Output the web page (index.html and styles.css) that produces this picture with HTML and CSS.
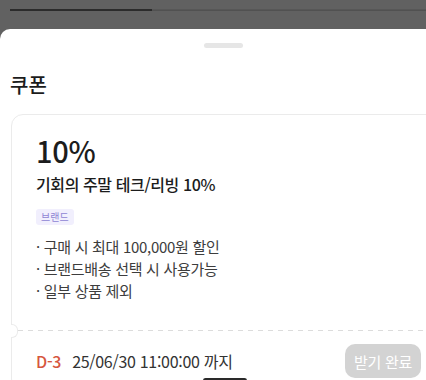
FILE: index.html
```html
<!DOCTYPE html>
<html lang="ko">
<head>
  <meta charset="UTF-8" />
  <meta name="viewport" content="width=device-width, initial-scale=1.0" />
  <title>쿠폰</title>
  <link rel="stylesheet" href="styles.css">
</head>
<body>

  <div class="tabs">
    <div class="tab-track">
      <div class="tab-active"></div>
    </div>
  </div>

  <section class="sheet">
    <div class="handle"></div>
    <h2 class="sheet-title">쿠폰</h2>

    <div class="coupon">
      <div class="coupon-body">
        <div class="rate">10%</div>
        <h3 class="coupon-name">기회의 주말 테크/리빙 10%</h3>
        <span class="badge">브랜드</span>
        <ul class="conditions">
          <li>구매 시 최대 100,000원 할인</li>
          <li>브랜드배송 선택 시 사용가능</li>
          <li>일부 상품 제외</li>
        </ul>
      </div>

      <div class="coupon-footer">
        <div class="expire">
          <span class="dday">D-3</span>
          <span class="date">25/06/30 11:00:00 까지</span>
        </div>
        <button class="get-button" disabled>받기 완료</button>
      </div>
    </div>
  </section>

  <div class="home-bar"></div>

</body>
</html>
```

FILE: styles.css
```css
:root {
  --dim: #616161;
  --text: #1c1c1c;
  --sub: #3d3d3d;
  --line: #ebebeb;
  --red: #d6563e;
}

* {
  box-sizing: border-box;
  margin: 0;
  padding: 0;
  font-family: 'Noto Sans CJK KR', 'Noto Sans', sans-serif;
}

html, body {
  height: 380px;
  overflow: hidden;
}

body {
  background: var(--dim);
  color: var(--text);
  position: relative;
}

.tabs {
  height: 29px;
  padding: 9px 0 0 10px;
}

.tab-track {
  height: 2px;
  background: linear-gradient(#5a5a5a, #4e4e4e);
}

.tab-active {
  width: 142px;
  height: 2px;
  background: #2b2b2b;
}

.sheet {
  width: 447px;
  height: 351px;
  background: #fff;
  border-top-left-radius: 10px;
  border-top-right-radius: 10px;
  padding-top: 14px;
}

.handle {
  width: 39px;
  height: 5px;
  margin: 0 auto;
  border-radius: 3px;
  background: #e6e6e6;
}

.sheet-title {
  font-size: 20px;
  font-weight: 500;
  line-height: 28px;
  margin: 23px 0 0 10px;
}

.coupon {
  width: 435px;
  margin: 15px 0 0 11px;
  border: 1px solid var(--line);
  border-radius: 12px;
}

.coupon-body {
  padding: 17px 24px 28px;
}

.rate {
  font-size: 29px;
  font-weight: 500;
  line-height: 36px;
  letter-spacing: -0.3px;
}

.coupon-name {
  font-size: 16px;
  font-weight: 500;
  line-height: 24px;
  margin-top: 4px;
  letter-spacing: -0.4px;
}

.badge {
  display: inline-block;
  margin-top: 13px;
  padding: 0 5px;
  height: 16px;
  line-height: 16px;
  font-size: 10px;
  color: #8f85d4;
  background: #f1effd;
  border-radius: 3px;
}

.conditions {
  list-style: none;
  margin-top: 10px;
}

.conditions li {
  font-size: 15px;
  line-height: 22px;
  color: var(--sub);
  letter-spacing: -0.3px;
}

.conditions li::before {
  content: '· ';
}

.coupon-footer {
  position: relative;
  display: flex;
  justify-content: space-between;
  align-items: flex-start;
  padding: 14px 24px 0;
  height: 60px;
  background: repeating-linear-gradient(90deg, #dcdcdc 0 5px, transparent 5px 10px) 6px 0 / 100% 1px no-repeat;
}

.coupon-footer::before {
  content: '';
  position: absolute;
  left: -1px;
  top: -6px;
  width: 6px;
  height: 12px;
  background: #fff;
  border: 1px solid var(--line);
  border-left: none;
  border-radius: 0 6px 6px 0;
}

.expire {
  display: flex;
  gap: 11px;
  font-size: 16px;
  line-height: 34px;
  letter-spacing: -0.3px;
}

.dday {
  color: var(--red);
  font-weight: 500;
}

.date {
  color: #333;
}

.get-button {
  width: 76px;
  height: 34px;
  border: none;
  border-radius: 10px;
  background: #d3d3d3;
  color: #fff;
  font-size: 15px;
  letter-spacing: -0.3px;
}

.home-bar {
  position: absolute;
  left: 203px;
  top: 378px;
  width: 44px;
  height: 5px;
  border-radius: 3px;
  background: #2a2a2a;
}
```
